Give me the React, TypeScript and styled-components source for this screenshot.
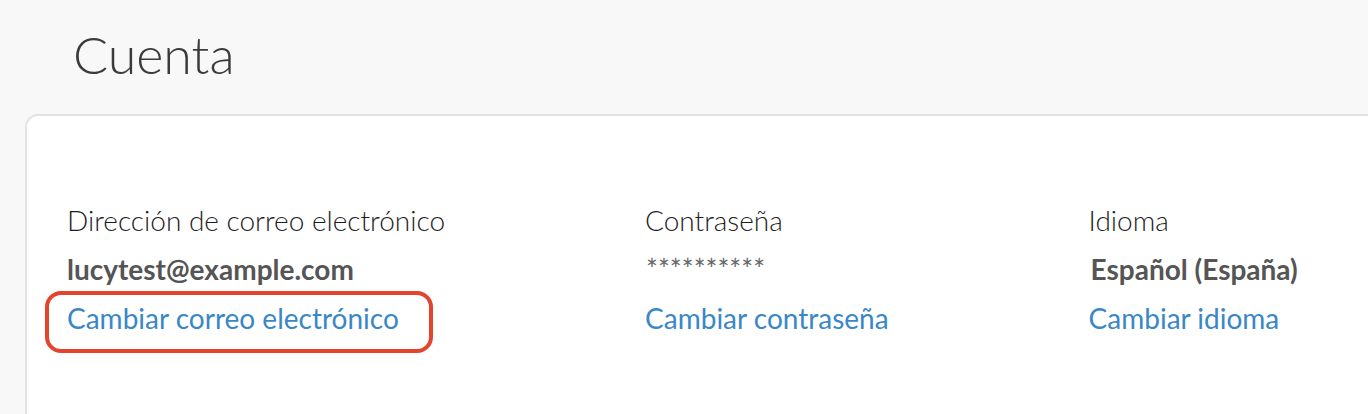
import styled, { createGlobalStyle } from "styled-components";

const GlobalStyle = createGlobalStyle`
  html, body {
    margin: 0;
    padding: 0;
    background: #f8f8f8;
    overflow: hidden;
  }
  body {
    font-family: Lato, "Open Sans", "Liberation Sans", sans-serif;
    -webkit-font-smoothing: antialiased;
  }
`;

const Page = styled.div`
  height: 414px;
  padding-top: 23px;
  box-sizing: border-box;
`;

const Title = styled.h1`
  margin: 0 0 28px 73px;
  font-size: 52px;
  line-height: 63px;
  font-weight: 300;
  color: #3b3b3b;
`;

const Card = styled.section`
  margin: 0 -60px 0 25px;
  background: #fff;
  border: 2px solid #e3e3e3;
  border-radius: 13px;
  padding: 86px 40px 120px;
  display: flex;
  gap: 200px;
`;

const Field = styled.div`
  display: flex;
  flex-direction: column;
  gap: 13px;
`;

const Label = styled.div`
  font-size: 28px;
  line-height: 36px;
  font-weight: 300;
  color: #1d1d1d;
`;

const Value = styled.div<{ $indent?: number }>`
  font-size: 28px;
  line-height: 36px;
  font-weight: 700;
  color: #555;
  padding-left: ${(p) => p.$indent ?? 0}px;
`;

const Masked = styled.div`
  font-size: 28px;
  line-height: 36px;
  font-weight: 400;
  color: #666;
  padding-left: 1px;
`;

const LinkWrap = styled.div`
  position: relative;
`;

const ChangeLink = styled.a`
  font-size: 28px;
  line-height: 36px;
  color: #3a87c8;
  text-decoration: none;
  display: inline-block;
`;

const Highlight = styled.span`
  position: absolute;
  left: -22px;
  top: -9px;
  width: 388px;
  height: 62px;
  box-sizing: border-box;
  border: 4px solid #e4432d;
  border-radius: 16px;
  pointer-events: none;
`;

export default function App() {
  return (
    <Page>
      <GlobalStyle />
      <Title>Cuenta</Title>
      <Card>
        <Field>
          <Label>Dirección de correo electrónico</Label>
          <Value>lucytest@example.com</Value>
          <LinkWrap>
            <ChangeLink href="#">Cambiar correo electrónico</ChangeLink>
            <Highlight />
          </LinkWrap>
        </Field>
        <Field>
          <Label>Contraseña</Label>
          <Masked>**********</Masked>
          <LinkWrap>
            <ChangeLink href="#">Cambiar contraseña</ChangeLink>
          </LinkWrap>
        </Field>
        <Field>
          <Label>Idioma</Label>
          <Value $indent={2}>Español (España)</Value>
          <LinkWrap>
            <ChangeLink href="#">Cambiar idioma</ChangeLink>
          </LinkWrap>
        </Field>
      </Card>
    </Page>
  );
}
